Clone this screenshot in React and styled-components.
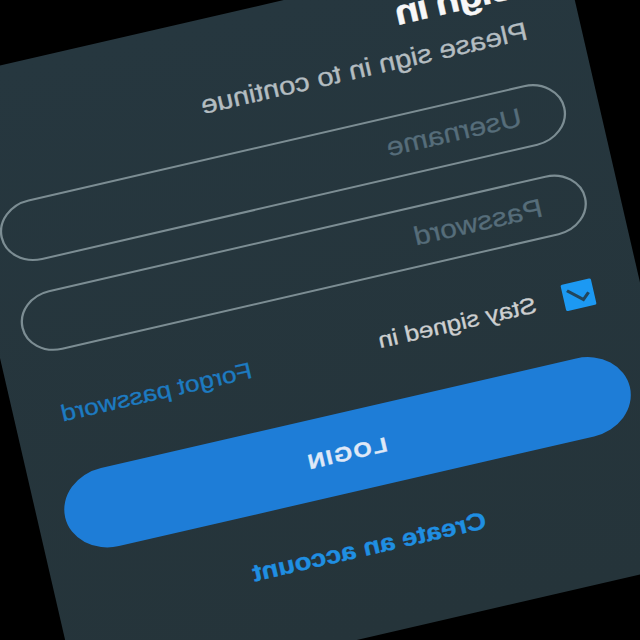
import React from "react";
import styled, { createGlobalStyle } from "styled-components";

const GlobalStyle = createGlobalStyle`
  html, body { margin: 0; background: #000; overflow: hidden; }
  *, *::before, *::after { box-sizing: border-box; }
`;

const Stage = styled.div`
  width: 640px;
  height: 640px;
  overflow: hidden;
  display: flex;
  justify-content: center;
  background: #000;
`;

const Panel = styled.main`
  width: 556.5px;
  flex: none;
  height: 640px;
  padding: 13px 23.5px 0 29.3px;
  display: flex;
  flex-direction: column;
  background: linear-gradient(#26373f, #25343a);
  font-family: "Liberation Sans", Arial, sans-serif;
  -webkit-text-stroke: 0.35px currentColor;
  transform: rotate(-13deg) scaleX(-1.15);
`;

const Title = styled.h1`
  margin: 0 0 0 18.5px;
  height: 50px;
  line-height: 50px;
  font-size: 34.6px;
  font-weight: 700;
  letter-spacing: -1.3px;
  color: #f8f8f8;
`;

const Subtitle = styled.p`
  margin: 5px 0 37px 17.4px;
  height: 32px;
  line-height: 32px;
  font-size: 25.5px;
  color: #b4bdc1;
`;

const Field = styled.input`
  width: 503.3px;
  height: 61.5px;
  margin: 0 0 31px;
  padding: 0 0 0 37px;
  border: 2px solid #7c8d93;
  border-radius: 31px;
  background: transparent;
  font: 400 26px "Liberation Sans", Arial, sans-serif;
  outline: none;
  &::placeholder { color: #566d7a; opacity: 1; -webkit-text-stroke: 0.3px #566d7a; }
`;

const Options = styled.div`
  height: 28px;
  margin-top: 17px;
  padding: 0 17px 0 12px;
  display: flex;
  align-items: center;
`;

const Check = styled.span`
  width: 27px;
  height: 27px;
  margin-right: 24.2px;
  border-radius: 1.5px;
  background: #1c99f3;
  svg { display: block; }
`;

const Remember = styled.label`
  padding-top: 1px;
  font-size: 22.4px;
  color: #cdcfd0;
  white-space: nowrap;
`;

const Forgot = styled.a`
  margin-left: auto;
  padding-top: 1px;
  font-size: 22.8px;
  color: #1d7bc1;
  white-space: nowrap;
`;

const Login = styled.button`
  width: 503.3px;
  height: 80.5px;
  margin-top: 47.5px;
  padding: 3px 0 0 2px;
  border: 0;
  border-radius: 41px;
  background: #1e7dd7;
  color: #dfe8f7;
  font: 700 20.5px "Liberation Sans", Arial, sans-serif;
  letter-spacing: 1.4px;
`;

const Create = styled.a`
  margin-top: 39px;
  line-height: 36px;
  text-align: center;
  font-size: 24px;
  font-weight: 700;
  color: #1f8fe2;
`;

export default function App() {
  return (
    <Stage>
      <GlobalStyle />
      <Panel>
        <Title>Sign in</Title>
        <Subtitle>Please sign in to continue</Subtitle>
        <Field placeholder="Username" />
        <Field placeholder="Password" type="password" />
        <Options>
          <Check>
            <svg width="27" height="27" viewBox="0 0 27 27" fill="none">
              <path d="M4.5 13.3 10.2 19.2 22.5 7" stroke="#21465e" strokeWidth="2.8" />
            </svg>
          </Check>
          <Remember>Stay signed in</Remember>
          <Forgot>Forgot password</Forgot>
        </Options>
        <Login>LOGIN</Login>
        <Create>Create an account</Create>
      </Panel>
    </Stage>
  );
}
